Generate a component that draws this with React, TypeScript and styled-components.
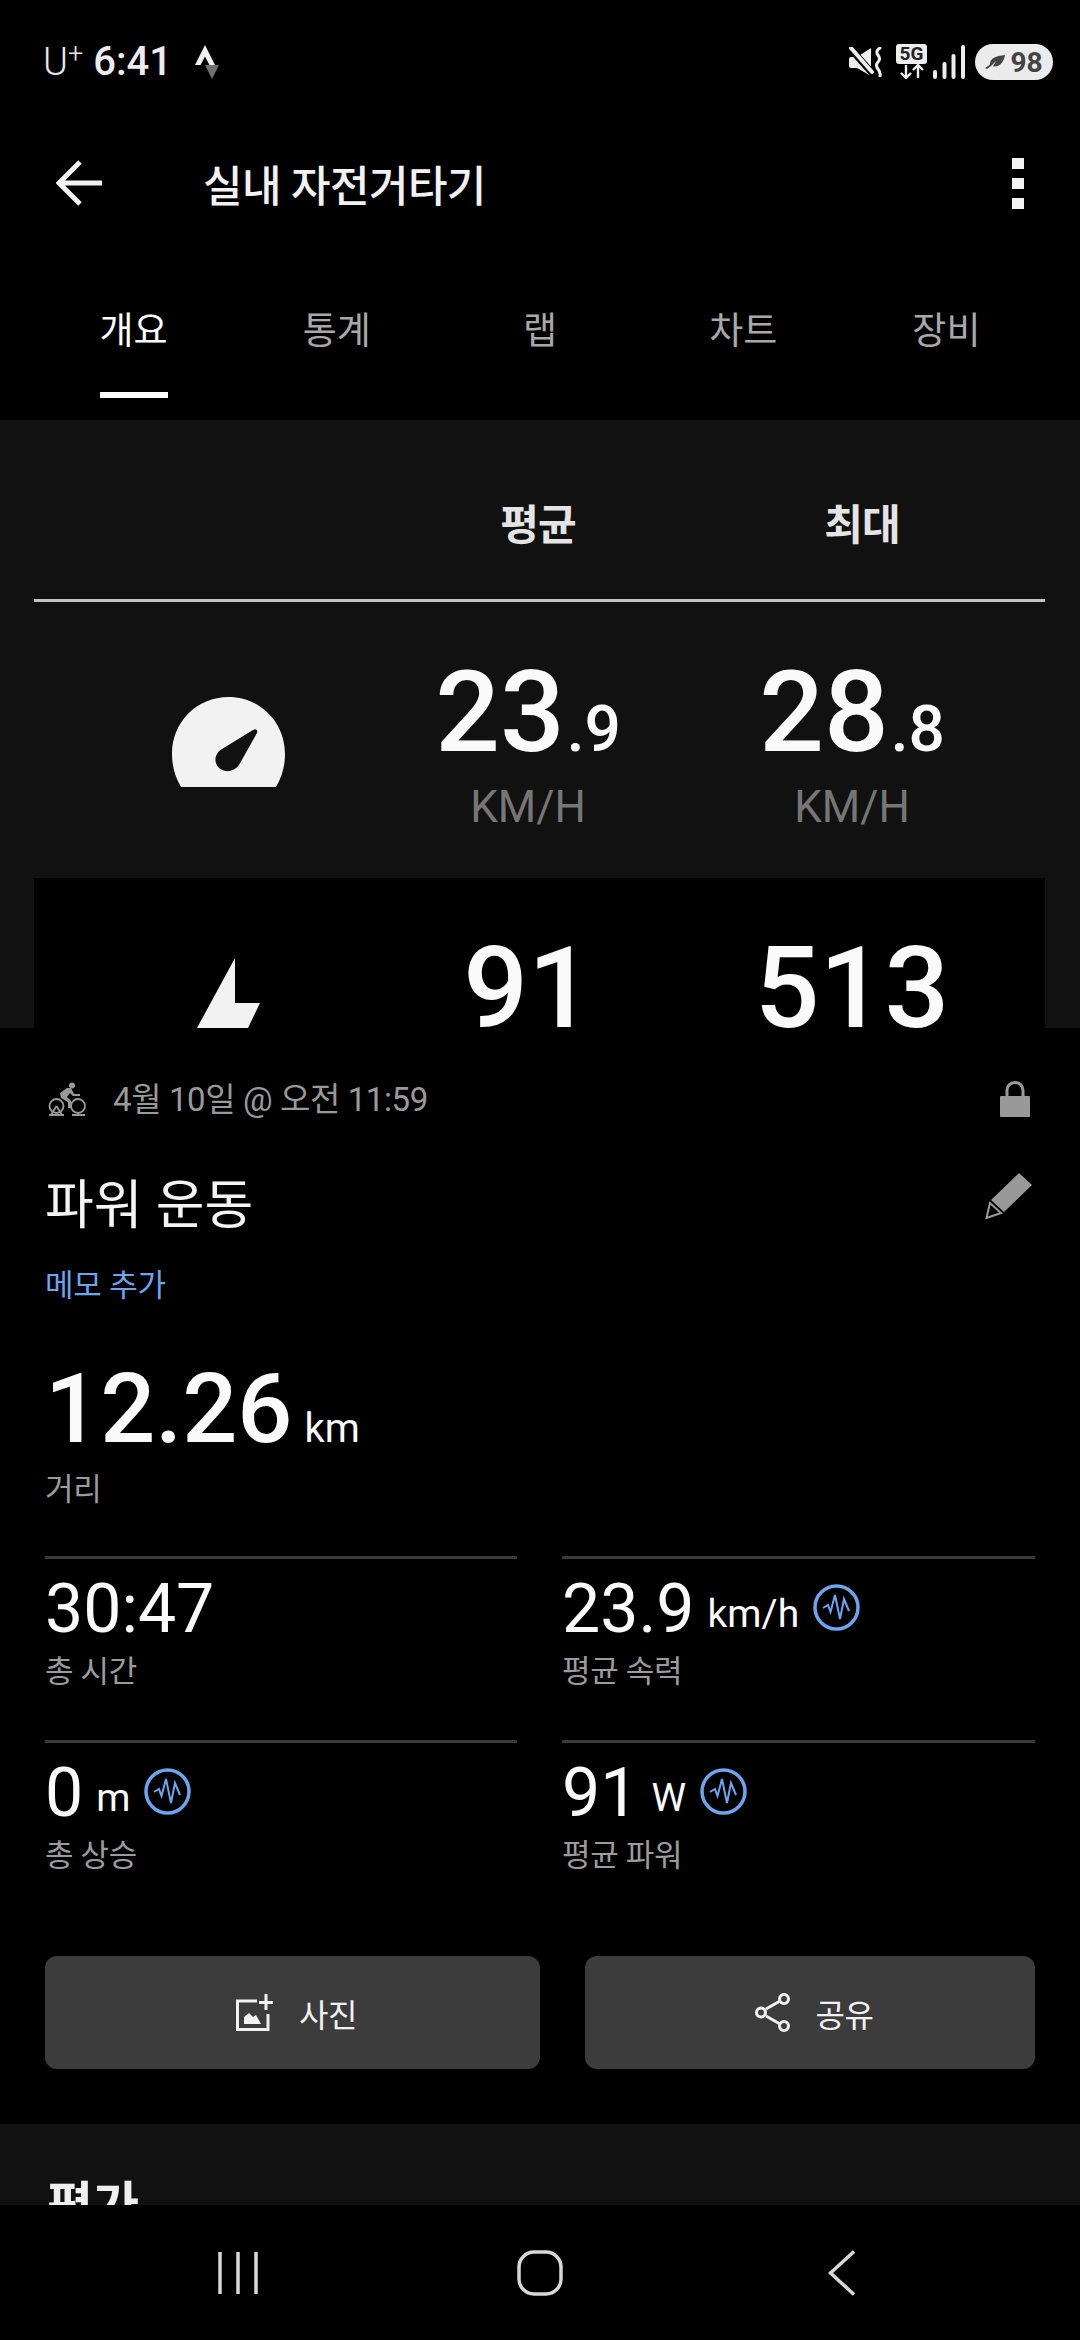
import styled, { createGlobalStyle } from 'styled-components'

const FONT = `Roboto, "Noto Sans CJK KR", sans-serif`

const GlobalStyle = createGlobalStyle`
    html, body {
        margin: 0;
        padding: 0;
        background: #000;
        font-family: ${FONT};
    }
`

const Screen = styled.div`
    width: 1080px;
    height: 2340px;
    overflow: hidden;
    background: #000;
    color: #f5f5f5;
    display: flex;
    flex-direction: column;

    > * {
        flex-shrink: 0;
    }
`

const StatusBar = styled.div`
    height: 120px;
    box-sizing: border-box;
    padding: 4px 27px 0 43px;
    display: flex;
    align-items: center;
    justify-content: space-between;
`

const StatusGroup = styled.div`
    display: flex;
    align-items: center;
`

const Carrier = styled.span`
    font-size: 38px;
    font-weight: 300;
    line-height: 40px;
    color: #e8e8e8;
    sup {
        font-size: 27px;
        line-height: 0;
        vertical-align: 12px;
        margin-left: 0;
    }
`

const Clock = styled.span`
    font-size: 40px;
    font-weight: 500;
    line-height: 40px;
    color: #ececec;
    margin-left: 10px;
    margin-right: 23px;
`

const NetworkStack = styled.div`
    width: 31px;
    margin: -2px 6px 0 13px;
    display: flex;
    flex-direction: column;
    align-items: center;
`

const NetworkBadge = styled.span`
    width: 31px;
    height: 20px;
    border-radius: 3px;
    background: #eee;
    color: #222;
    font-size: 19px;
    font-weight: 700;
    line-height: 20px;
    text-align: center;
`

const Battery = styled.div`
    width: 78px;
    height: 36px;
    margin-left: 10px;
    border-radius: 18px;
    background: #ececec;
    color: #444;
    display: flex;
    align-items: center;
    justify-content: center;
    gap: 5px;
    font-size: 28px;
    font-weight: 700;
`

const Header = styled.div`
    height: 126px;
    padding: 0 56px;
    display: flex;
    align-items: center;
`

const Title = styled.h1`
    flex: 1;
    margin: 0 0 0 101px;
    font-size: 43px;
    letter-spacing: -0.6px;
    font-weight: 500;
    color: #f2f2f2;
`

const Tabs = styled.div`
    height: 174px;
    padding: 0 32px;
    display: grid;
    grid-template-columns: repeat(5, 1fr);
    box-sizing: border-box;
`

const Tab = styled.div<{ $active?: boolean }>`
    padding-top: 64px;
    display: flex;
    flex-direction: column;
    align-items: center;
    font-size: 37px;
    line-height: 44px;
    color: ${(p) => (p.$active ? '#fff' : '#a8a8a8')};
`

const TabMark = styled.div<{ $active?: boolean }>`
    width: 68px;
    height: 6px;
    margin-top: 38px;
    background: ${(p) => (p.$active ? '#fff' : 'transparent')};
`

const LapPanel = styled.section`
    height: 608px;
    overflow: hidden;
    padding: 0 35px 0 34px;
    background: #111;
`

const LapHead = styled.div`
    height: 179px;
    border-bottom: 3px solid #c4c4c4;
    display: flex;
    align-items: center;
    padding-left: 342px;
`

const LapHeadLabel = styled.div`
    width: 324px;
    font-size: 42px;
    font-weight: 700;
    letter-spacing: -1px;
    text-align: center;
    color: #e4e4e4;
    margin-top: 24px;
`

const LapRow = styled.div<{ $dark?: boolean }>`
    height: 276px;
    display: flex;
    background: ${(p) => (p.$dark ? '#000' : 'transparent')};
`

const LapIcon = styled.div<{ $top: number }>`
    width: 332px;
    padding: ${(p) => p.$top}px 0 0 56px;
    box-sizing: border-box;
    display: flex;
    justify-content: center;
`

const LapCell = styled.div`
    width: 324px;
    padding-top: 53px;
    display: flex;
    flex-direction: column;
    align-items: center;
`

const LapValue = styled.div`
    font-size: 114px;
    line-height: 114px;
    font-weight: 500;
    color: #fafafa;
    small {
        font-size: 64px;
        line-height: 1;
        font-weight: 500;
        margin-left: 2px;
    }
`

const LapUnit = styled.div`
    margin-top: 16px;
    font-size: 44px;
    line-height: 44px;
    color: #767676;
`

const Sheet = styled.section`
    padding: 0 45px;
    background: #000;
`

const DateRow = styled.div`
    height: 142px;
    box-sizing: border-box;
    padding: 0 5px 0 3px;
    display: flex;
    align-items: center;
    color: #999;
    font-size: 33px;
    letter-spacing: -0.4px;
`

const DateText = styled.span`
    flex: 1;
    margin: -4px 0 0 25px;
`

const WorkoutRow = styled.div`
    height: 68px;
    display: flex;
    align-items: center;
    justify-content: space-between;
    padding-right: 3px;

    svg {
        margin-top: -17px;
    }
`

const WorkoutName = styled.h2`
    margin: -6px 0 0;
    font-size: 53px;
    font-weight: 400;
    color: #f4f4f4;
`

const MemoLink = styled.div`
    margin-top: 28px;
    font-size: 31px;
    line-height: 40px;
    letter-spacing: -0.2px;
    color: #6aa5ee;
`

const Distance = styled.div`
    margin-top: 55px;
    font-size: 97px;
    line-height: 96px;
    font-weight: 500;
    color: #fafafa;
    small {
        margin-left: 12px;
        font-size: 40px;
        line-height: 1;
        font-weight: 400;
    }
`

const MetricLabel = styled.div`
    font-size: 31px;
    line-height: 40px;
    letter-spacing: -0.3px;
    color: #9b9b9b;
`

const DistanceLabel = styled(MetricLabel)`
    margin-top: 13px;
`

const MetricGrid = styled.div`
    margin-top: 46px;
    display: grid;
    grid-template-columns: 472px 473px;
    column-gap: 45px;
`

const Metric = styled.div`
    height: 184px;
    box-sizing: border-box;
    border-top: 3px solid #3a3a3a;
    padding-top: 17px;
`

const MetricValue = styled.div`
    display: flex;
    align-items: flex-end;
    font-size: 68px;
    line-height: 66px;
    margin-bottom: 10px;
    color: #fafafa;
    small {
        font-size: 39px;
        line-height: 55px;
        margin-left: 13px;
    }
    svg {
        margin: 0 0 11px 14px;
    }
`

const Actions = styled.div`
    margin-top: 32px;
    display: flex;
    gap: 45px;
`

const ActionButton = styled.button<{ $width: number }>`
    width: ${(p) => p.$width}px;
    height: 113px;
    border: 0;
    border-radius: 12px;
    padding: 0 0 0 8px;
    background: #3c3c3c;
    color: #f2f2f2;
    font-family: ${FONT};
    font-size: 32px;
    letter-spacing: -0.5px;
    display: flex;
    align-items: center;
    justify-content: center;
    gap: 26px;
`

const RatingSection = styled.section`
    margin-top: 55px;
    height: 81px;
    overflow: hidden;
    padding: 52px 0 0 47px;
    box-sizing: border-box;
    background: #111;
    font-size: 50px;
    line-height: 60px;
    font-weight: 700;
    color: #f0f0f0;
`

const NavBar = styled.nav`
    height: 135px;
    padding: 0 87px;
    display: grid;
    grid-template-columns: repeat(3, 302px);
    place-items: center;
    background: #000;
`

const StravaIcon = () => (
    <svg width="24" height="34" viewBox="0 0 24 34">
        <path d="M10 0 20 20H14.5L10 11.5 5.5 20H0Z" fill="#f2f2f2" />
        <path d="M10 20H24L17 34Z" fill="#707070" />
    </svg>
)

const MuteIcon = () => (
    <svg width="34" height="30" viewBox="0 0 34 30">
        <path d="M2 10H8L22 1V29L8 21H2Q0 21 0 19V12Q0 10 2 10Z" fill="#eee" />
        <path d="M0 0 24 27" stroke="#000" strokeWidth="7" />
        <path d="M2 1 23 25" stroke="#eee" strokeWidth="4" strokeLinecap="round" />
        <path d="M31 1Q26 4 29 8T29 15 29 22 31 29" fill="none" stroke="#eee" strokeWidth="3" strokeLinecap="round" />
    </svg>
)

const TransferArrows = () => (
    <svg width="26" height="15" viewBox="0 0 26 15">
        <path d="M7 1V14M2 9 7 14 12 9M19 14V1M14 6 19 1 24 6" fill="none" stroke="#eee" strokeWidth="2.4" />
    </svg>
)

const SignalIcon = () => (
    <svg width="32" height="34" viewBox="0 0 32 34">
        <rect x="0" y="25" width="4" height="9" rx="2" fill="#eee" />
        <rect x="9.5" y="17" width="4" height="17" rx="2" fill="#eee" />
        <rect x="18.5" y="9" width="4" height="25" rx="2" fill="#eee" />
        <rect x="28" y="0" width="4" height="34" rx="2" fill="#eee" />
    </svg>
)

const LeafIcon = () => (
    <svg width="20" height="14" viewBox="0 0 20 14">
        <path d="M5 9C5 3 11 1 20 0 19 7 15 12 8 11.5L11 6 6 11 2 14 0 13 4.500 10Z" fill="#444" />
    </svg>
)

const BackArrow = () => (
    <svg width="46" height="46" viewBox="0 0 46 46">
        <path d="M46 23H4M24 2 3 23 24 44" fill="none" stroke="#f2f2f2" strokeWidth="5" />
    </svg>
)

const KebabIcon = () => (
    <svg width="12" height="51" viewBox="0 0 12 51">
        <rect width="12" height="11" fill="#f2f2f2" />
        <rect y="20" width="12" height="11" fill="#f2f2f2" />
        <rect y="40" width="12" height="11" fill="#f2f2f2" />
    </svg>
)

const GaugeIcon = () => (
    <svg width="113" height="90" viewBox="0 0 113 90">
        <path
            fillRule="evenodd"
            fill="#f2f2f2"
            d="M9 90C3 80 0 69 0 57 0 25 25 0 56.500 0S113 25 113 57C113 69 110 80 104 90ZM81 33C84 31 86 33 85 36L67 68C62 75 53 76 47 71 41 65 43 56 50 52Z"
        />
    </svg>
)

const BoltIcon = () => (
    <svg width="63" height="70" viewBox="0 0 63 70">
        <path d="M38 0V45H63L51 70H0Z" fill="#f2f2f2" />
    </svg>
)

const BikeIcon = () => (
    <svg width="40" height="34" viewBox="0 0 40 34">
        <circle cx="24" cy="3.500" r="3" fill="#999" />
        <path d="M12 11 19 6H23L26 12H32V14H25L22 11 19 15 23 19V26H20V20L13 16Z" fill="#999" />
        <circle cx="8.500" cy="24" r="7" fill="none" stroke="#999" strokeWidth="1.800" />
        <circle cx="30" cy="24" r="7" fill="none" stroke="#999" strokeWidth="1.800" />
        <path d="M1 33H16M8.500 24 3 33M8.500 24 14 33M24 33H37" fill="none" stroke="#999" strokeWidth="1.800" />
    </svg>
)

const LockIcon = () => (
    <svg width="30" height="36" viewBox="0 0 30 36">
        <path d="M7 16V9A8 7.500 0 0 1 23 9V16" fill="none" stroke="#999" strokeWidth="3" />
        <rect y="15" width="30" height="21" rx="1" fill="#999" />
    </svg>
)

const PencilIcon = () => (
    <svg width="47" height="46" viewBox="0 0 47 46">
        <path d="M34 0 47 12 19 39 6 27Z" fill="#999" />
        <path d="M5 30 16 40 1.500 45Z" fill="none" stroke="#999" strokeWidth="2" />
    </svg>
)

const PulseIcon = () => (
    <svg width="47" height="47" viewBox="0 0 47 47">
        <circle cx="23.500" cy="23.500" r="21.500" fill="none" stroke="#6aa5ee" strokeWidth="3.500" />
        <path d="M10 24 15 21 17.500 28 22 11 27 35 31 15 36 27" fill="none" stroke="#6aa5ee" strokeWidth="2" />
    </svg>
)

const PhotoIcon = () => (
    <svg width="37" height="37" viewBox="0 0 37 37">
        <path d="M21 7H1.500V35.500H32V20" fill="none" stroke="#f2f2f2" strokeWidth="3" />
        <path d="M23 8.500H37M30 0V16" fill="none" stroke="#f2f2f2" strokeWidth="3" />
        <path d="M8 30V23L13 19 17 23 20 21 25 30Z" fill="#f2f2f2" />
    </svg>
)

const ShareIcon = () => (
    <svg width="35" height="39" viewBox="0 0 35 39">
        <path d="M25 8 11 16M11 23 25 31" stroke="#f2f2f2" strokeWidth="3" />
        <circle cx="29" cy="6" r="4.500" fill="none" stroke="#f2f2f2" strokeWidth="3" />
        <circle cx="6" cy="19.500" r="4.500" fill="none" stroke="#f2f2f2" strokeWidth="3" />
        <circle cx="29" cy="33" r="4.500" fill="none" stroke="#f2f2f2" strokeWidth="3" />
    </svg>
)

const RecentsIcon = () => (
    <svg width="40" height="44" viewBox="0 0 40 44">
        <path d="M2 1V43M20 1V43M38 1V43" stroke="#d8d8d8" strokeWidth="3.500" />
    </svg>
)

const HomeIcon = () => (
    <svg width="46" height="46" viewBox="0 0 46 46">
        <rect x="2" y="2" width="42" height="42" rx="15" fill="none" stroke="#d8d8d8" strokeWidth="3.500" />
    </svg>
)

const NavBackIcon = () => (
    <svg width="28" height="46" viewBox="0 0 28 46">
        <path d="M26 1.500 2.500 23 26 44.500" fill="none" stroke="#d8d8d8" strokeWidth="3.500" />
    </svg>
)

const tabs = ['개요', '통계', '랩', '차트', '장비']

const laps = [
    { icon: <GaugeIcon />, top: 95, avg: '23', avgDec: '.9', max: '28', maxDec: '.8', unit: 'KM/H' },
    { icon: <BoltIcon />, top: 80, avg: '91', max: '513', dark: true },
]

const metrics = [
    { value: '30:47', label: '총 시간' },
    { value: '23.9', unit: 'km/h', label: '평균 속력', pulse: true },
    { value: '0', unit: 'm', label: '총 상승', pulse: true },
    { value: '91', unit: 'W', label: '평균 파워', pulse: true },
]

export default function App() {
    return (
        <Screen>
            <GlobalStyle />
            <StatusBar>
                <StatusGroup>
                    <Carrier>
                        U<sup>+</sup>
                    </Carrier>
                    <Clock>6:41</Clock>
                    <StravaIcon />
                </StatusGroup>
                <StatusGroup>
                    <MuteIcon />
                    <NetworkStack>
                        <NetworkBadge>5G</NetworkBadge>
                        <TransferArrows />
                    </NetworkStack>
                    <SignalIcon />
                    <Battery>
                        <LeafIcon />
                        98
                    </Battery>
                </StatusGroup>
            </StatusBar>
            <Header>
                <BackArrow />
                <Title>실내 자전거타기</Title>
                <KebabIcon />
            </Header>
            <Tabs>
                {tabs.map((t, i) => (
                    <Tab key={t} $active={i === 0}>
                        {t}
                        <TabMark $active={i === 0} />
                    </Tab>
                ))}
            </Tabs>
            <LapPanel>
                <LapHead>
                    <LapHeadLabel>평균</LapHeadLabel>
                    <LapHeadLabel>최대</LapHeadLabel>
                </LapHead>
                {laps.map((l) => (
                    <LapRow key={l.avg} $dark={l.dark}>
                        <LapIcon $top={l.top}>{l.icon}</LapIcon>
                        <LapCell>
                            <LapValue>
                                {l.avg}
                                {l.avgDec && <small>{l.avgDec}</small>}
                            </LapValue>
                            {l.unit && <LapUnit>{l.unit}</LapUnit>}
                        </LapCell>
                        <LapCell>
                            <LapValue>
                                {l.max}
                                {l.maxDec && <small>{l.maxDec}</small>}
                            </LapValue>
                            {l.unit && <LapUnit>{l.unit}</LapUnit>}
                        </LapCell>
                    </LapRow>
                ))}
            </LapPanel>
            <Sheet>
                <DateRow>
                    <BikeIcon />
                    <DateText>4월 10일 @ 오전 11:59</DateText>
                    <LockIcon />
                </DateRow>
                <WorkoutRow>
                    <WorkoutName>파워 운동</WorkoutName>
                    <PencilIcon />
                </WorkoutRow>
                <MemoLink>메모 추가</MemoLink>
                <Distance>
                    12.26<small>km</small>
                </Distance>
                <DistanceLabel>거리</DistanceLabel>
                <MetricGrid>
                    {metrics.map((m) => (
                        <Metric key={m.label}>
                            <MetricValue>
                                {m.value}
                                {m.unit && <small>{m.unit}</small>}
                                {m.pulse && <PulseIcon />}
                            </MetricValue>
                            <MetricLabel>{m.label}</MetricLabel>
                        </Metric>
                    ))}
                </MetricGrid>
                <Actions>
                    <ActionButton $width={495}>
                        <PhotoIcon />
                        사진
                    </ActionButton>
                    <ActionButton $width={450}>
                        <ShareIcon />
                        공유
                    </ActionButton>
                </Actions>
            </Sheet>
            <RatingSection>평가</RatingSection>
            <NavBar>
                <RecentsIcon />
                <HomeIcon />
                <NavBackIcon />
            </NavBar>
        </Screen>
    )
}
